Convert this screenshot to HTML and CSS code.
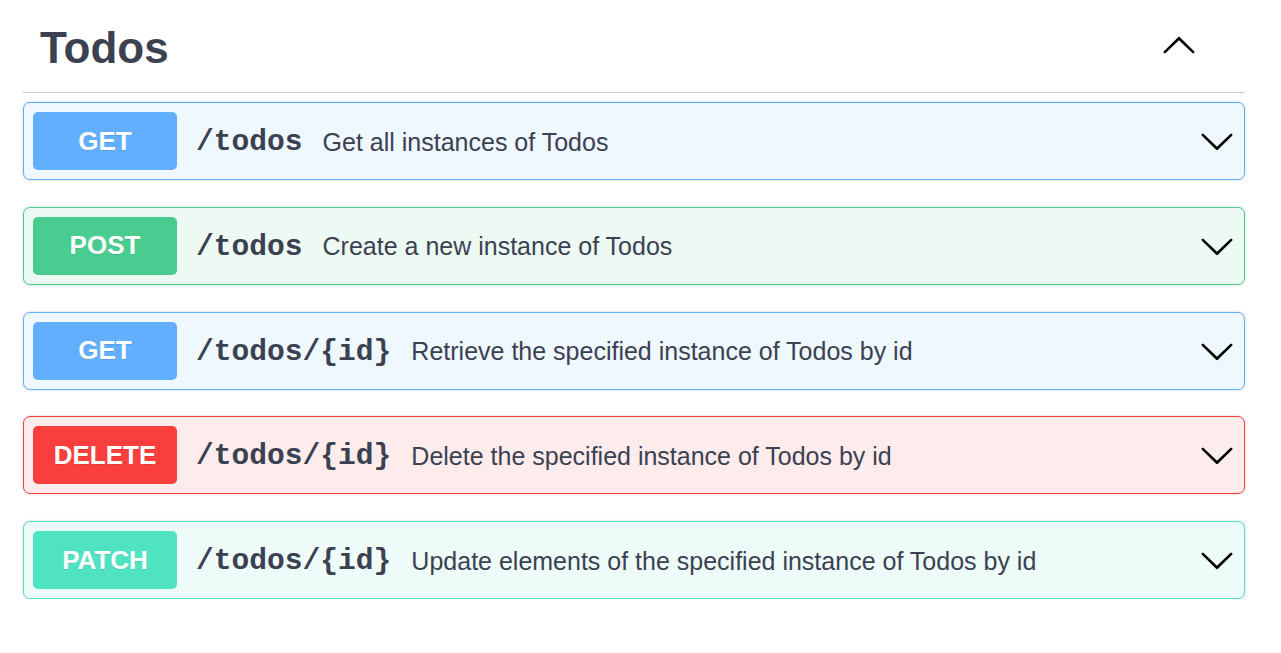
FILE: index.html
```html
<!DOCTYPE html>
<html lang="en">
<head>
<meta charset="utf-8">
<title>Todos</title>
<link rel="stylesheet" href="styles.css">
</head>
<body>
<div class="section">
  <div class="tag-header">
    <h3 class="tag-title">Todos</h3>
    <button class="tag-toggle" aria-label="Collapse">
      <svg class="arrow up" viewBox="0 0 20 20" width="36" height="36"><path d="M17.418 6.109c.272-.268.709-.268.979 0s.271.701 0 .969l-7.908 7.83c-.27.268-.707.268-.979 0l-7.908-7.83c-.27-.268-.27-.701 0-.969.271-.268.709-.268.979 0L10 13.25l7.418-7.141z"/></svg>
    </button>
  </div>
  <div class="ops">
    <div class="op op-get">
      <span class="method">GET</span>
      <span class="path">/todos</span>
      <span class="desc">Get all instances of Todos</span>
      <svg class="arrow" viewBox="0 0 20 20" width="36" height="36"><path d="M17.418 6.109c.272-.268.709-.268.979 0s.271.701 0 .969l-7.908 7.83c-.27.268-.707.268-.979 0l-7.908-7.830c-.27-.268-.27-.701 0-.969.271-.268.709-.268.979 0L10 13.25l7.418-7.141z"/></svg>
    </div>
    <div class="op op-post">
      <span class="method">POST</span>
      <span class="path">/todos</span>
      <span class="desc">Create a new instance of Todos</span>
      <svg class="arrow" viewBox="0 0 20 20" width="36" height="36"><path d="M17.418 6.109c.272-.268.709-.268.979 0s.271.701 0 .969l-7.908 7.83c-.27.268-.707.268-.979 0l-7.908-7.83c-.27-.268-.27-.701 0-.969.271-.268.709-.268.979 0L10 13.25l7.418-7.141z"/></svg>
    </div>
    <div class="op op-get">
      <span class="method">GET</span>
      <span class="path">/todos/{id}</span>
      <span class="desc">Retrieve the specified instance of Todos by id</span>
      <svg class="arrow" viewBox="0 0 20 20" width="36" height="36"><path d="M17.418 6.109c.272-.268.709-.268.979 0s.271.701 0 .969l-7.908 7.83c-.27.268-.707.268-.979 0l-7.908-7.83c-.27-.268-.27-.701 0-.969.271-.268.709-.268.979 0L10 13.25l7.418-7.141z"/></svg>
    </div>
    <div class="op op-delete">
      <span class="method">DELETE</span>
      <span class="path">/todos/{id}</span>
      <span class="desc">Delete the specified instance of Todos by id</span>
      <svg class="arrow" viewBox="0 0 20 20" width="36" height="36"><path d="M17.418 6.109c.272-.268.709-.268.979 0s.271.701 0 .969l-7.908 7.83c-.27.268-.707.268-.979 0l-7.908-7.83c-.27-.268-.27-.701 0-.969.271-.268.709-.268.979 0L10 13.25l7.418-7.141z"/></svg>
    </div>
    <div class="op op-patch">
      <span class="method">PATCH</span>
      <span class="path">/todos/{id}</span>
      <span class="desc">Update elements of the specified instance of Todos by id</span>
      <svg class="arrow" viewBox="0 0 20 20" width="36" height="36"><path d="M17.418 6.109c.272-.268.709-.268.979 0s.271.701 0 .969l-7.908 7.83c-.27.268-.707.268-.979 0l-7.908-7.83c-.27-.268-.27-.701 0-.969.271-.268.709-.268.979 0L10 13.25l7.418-7.141z"/></svg>
    </div>
  </div>
</div>
</body>
</html>
```

FILE: styles.css
```css
html, body {
  margin: 0;
  padding: 0;
  background: #ffffff;
}

body {
  font-family: "Liberation Sans", Arial, sans-serif;
  color: #3b4151;
}

.section {
  padding: 4px 36px 0 23px;
}

.tag-header {
  display: flex;
  align-items: flex-start;
  justify-content: space-between;
  padding: 18px 0 18px 17px;
  border-bottom: 1px solid #cacbcf;
  margin-bottom: 9px;
}

.tag-title {
  margin: 0;
  font-size: 44px;
  line-height: 52px;
  font-weight: 700;
  color: #3b4151;
}

.tag-toggle {
  border: none;
  background: none;
  padding: 0;
  margin: 6px 48px 0 0;
  width: 36px;
  height: 36px;
  cursor: pointer;
}

.arrow {
  display: block;
  fill: #000000;
  flex: none;
}

.arrow.up {
  transform: rotate(180deg);
}

.ops {
  display: flex;
  flex-direction: column;
  gap: 26.75px;
}

.op {
  display: flex;
  align-items: center;
  padding: 9px;
  border: 1px solid;
  border-radius: 7px;
  box-shadow: 0 0 3px rgba(0, 0, 0, 0.19);
}

.method {
  flex: none;
  width: 144px;
  height: 58px;
  display: flex;
  align-items: center;
  justify-content: center;
  border-radius: 5px;
  color: #ffffff;
  font-size: 26px;
  font-weight: 700;
  text-shadow: 0 1px 0 rgba(0, 0, 0, 0.1);
}

.path {
  margin-left: 19px;
  padding-top: 2px;
  font-family: "Liberation Mono", "Courier New", monospace;
  font-weight: 700;
  font-size: 29.6px;
  color: #3b4151;
}

.desc {
  flex: 1;
  margin-left: 20px;
  padding-top: 2px;
  font-size: 25px;
  color: #3b4151;
}

.op-get { background: #eff7ff; border-color: #61affe; }
.op-get .method { background: #61affe; }

.op-post { background: #edfaf4; border-color: #49cc90; }
.op-post .method { background: #49cc90; }

.op-delete { background: #feecec; border-color: #f93e3e; }
.op-delete .method { background: #f93e3e; }

.op-patch { background: #edfcf9; border-color: #50e3c2; }
.op-patch .method { background: #50e3c2; }
```
